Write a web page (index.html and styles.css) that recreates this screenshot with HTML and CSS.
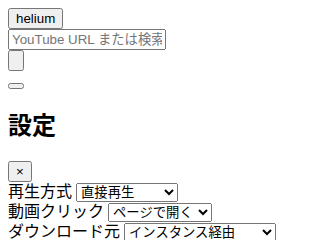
FILE: index.html
```html
<!DOCTYPE html>
<html lang="ja">
<head>
    <meta charset="UTF-8" />
    <meta name="viewport" content="width=device-width, initial-scale=1.0"/>
    <title>helium</title>
    <link rel="stylesheet" href="styles.css">
</head>
<body>
<header>
    <div><button id="homeBtn">helium</button></div>
    <form id="searchForm">
        <div><input type="text" id="query" class="query" placeholder="YouTube URL または検索" /></div>
        <div><button type="submit" class="search-btn"><span class="icon"></span></button></div>
    </form>
    <div class="settings-row"><button id="settingsBtn"></button></div>
</header>

<section id="settings">
    <h2>設定</h2>
    <div><button id="closeSettings">×</button></div>
    <div class="row">
        <label for="playMode">再生方式</label>
        <select id="playMode" class="sel-play">
            <option>直接再生</option>
            <option>埋め込み再生</option>
        </select>
    </div>
    <div class="row">
        <label for="clickMode">動画クリック</label>
        <select id="clickMode" class="sel-click">
            <option>ページで開く</option>
            <option>すぐ再生</option>
        </select>
    </div>
    <div class="row">
        <label for="dlSource">ダウンロード元</label>
        <select id="dlSource" class="sel-dl">
            <option>インスタンス経由</option>
            <option>直接</option>
        </select>
    </div>
</section>
</body>
</html>
```

FILE: styles.css
```css
body {
    font-family: "Liberation Serif", "Noto Sans CJK JP", serif;
    line-height: 1.15;
}

h2 {
    line-height: 1.25;
}

button,
input,
select {
    font-family: "Liberation Sans", "Noto Sans CJK JP", sans-serif;
    font-size: 13.333px;
}

.query {
    width: 150px;
}

.icon {
    display: block;
    height: 15px;
}

.row {
    line-height: 19px;
}

.sel-play {
    width: 102px;
}

.sel-click {
    width: 104px;
}

.sel-dl {
    width: 152px;
}
```
